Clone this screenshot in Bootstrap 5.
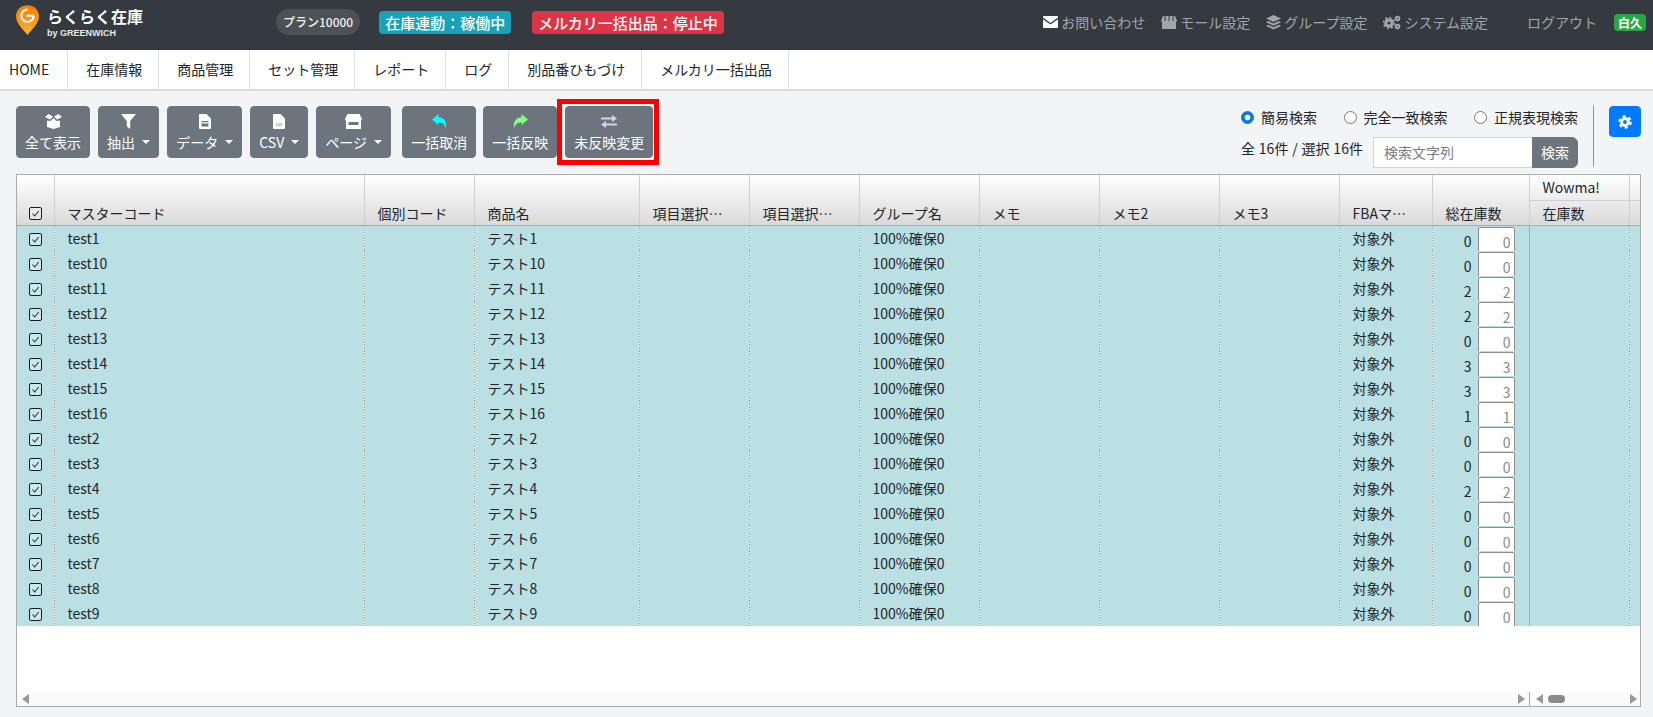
<!DOCTYPE html>
<html lang="ja">
<head>
    <meta charset="UTF-8">
    <meta name="viewport" content="width=device-width, initial-scale=1.0">
    <title>らくらく在庫</title>
    <link href="https://cdn.jsdelivr.net/npm/bootstrap@5.3.0/dist/css/bootstrap.min.css" rel="stylesheet">
    <style>
        body {
            font-family: "Noto Sans CJK JP", "Noto Sans", sans-serif;
            font-size: 14px;
            color: #212529;
            background-color: #f3f4f6;
            height: 717px;
            overflow: hidden;
        }

        /* ヘッダー */
        .top-bar {
            height: 50px;
            background-color: #343a40;
            padding: 0 7px 6px 16px;
        }
        .logo-box {
            width: 260px;
            align-self: flex-start;
            margin-top: 5px;
        }
        .logo-text {
            color: #fff;
            font-size: 16px;
            font-weight: 700;
            line-height: 20px;
            margin-top: 1px;
        }
        .logo-sub {
            color: #e9e9e9;
            font-family: "Liberation Sans", sans-serif;
            font-size: 9px;
            font-weight: 700;
            line-height: 10px;
            margin-top: 2px;
        }
        .plan-pill {
            background-color: #4c5156;
            color: #f2f2f2;
            font-size: 12px;
            font-weight: 500;
            padding: 5px 7px;
            border-radius: 13px;
            line-height: 16px;
        }
        .state-pill {
            color: #fff;
            font-size: 15px;
            font-weight: 500;
            line-height: 23px;
            padding: 0 6px;
            border-radius: 4px;
        }
        .state-on { background-color: #17a2b8; margin-left: 19px; }
        .state-off { background-color: #dc3545; margin-left: 21px; }
        .top-link {
            color: #a3a6a9;
            text-decoration: none;
            display: flex;
            align-items: center;
            gap: 3px;
            margin-left: 16px;
        }
        .logout-link { margin-left: 39px; }
        .user-tag {
            background-color: #28a745;
            color: #fff;
            font-size: 12px;
            font-weight: 700;
            line-height: 17px;
            padding: 0 4px;
            border-radius: 4px;
            margin-left: 17px;
        }

        /* メニュー */
        .menu-bar {
            height: 41px;
            background-color: #fff;
            border-bottom: 2px solid #dcdcdc;
        }
        .menu-bar .nav-link {
            color: #212529;
            font-size: 14px;
            line-height: 39px;
            padding: 0 16px 0 18px;
            border-right: 1px solid #dee2e6;
        }
        .menu-bar .nav-item:first-child .nav-link { padding: 0 18px 0 9px; }

        /* ツールバー */
        .page-body { padding: 15px 12px 0 16px; }
        .tool-row { height: 68px; }
        .tool-btn {
            position: relative;
            background-color: #6c757d;
            border-color: #6c757d;
            color: #fff;
            font-size: 14px;
            line-height: 21px;
            padding: 7px 8px 5px;
            border-radius: 4px;
            height: 52px;
            white-space: nowrap;
        }
        .tool-btn svg { display: block; margin: 0 auto 3px; height: 15px; }
        .tool-btn.dropdown-toggle::after { margin-left: 4px; }
        .btn-gap { margin-left: 3px; }
        .btn-tight { margin-left: -1px; }
        .marked-btn::before {
            content: "";
            position: absolute;
            inset: -8px -7px -8px -9px;
            border: 5px solid #f00;
        }
        .search-box { width: 337px; margin-right: 15px; }
        .search-kind { font-size: 14px; line-height: 22px; margin-bottom: 9px; }
        .search-kind .form-check { padding-left: 20px; margin: 0; min-height: 0; }
        .search-kind .form-check-input {
            width: 13px;
            height: 13px;
            margin: 5px 0 0 -20px;
            border-color: #777;
        }
        .search-kind .form-check-input:checked {
            background-color: #0d7ad8;
            border-color: #0d7ad8;
        }
        .search-count { line-height: 20px; margin-top: 1px; word-spacing: .7px; }
        .search-group { width: 205px; }
        .search-group .form-control {
            height: 31px;
            font-size: 14px;
            padding: 2px 10px 4px;
            border-radius: 0;
            border-color: #ced4da;
        }
        .search-group .form-control::placeholder { color: #757c83; }
        .search-group .btn {
            height: 31px;
            font-size: 14px;
            padding: 3px 8px;
            background-color: #6c757d;
            border-color: #6c757d;
        }
        .tool-rule { border-left: 1px solid #8a8f94; height: 60px; margin-right: 15px; }
        .gear-btn {
            width: 32px;
            height: 31px;
            padding: 0;
            border-radius: 4px;
            background-color: #007bff;
            border-color: #007bff;
        }

        /* 在庫テーブル */
        .grid-wrap {
            height: 533px;
            border: 1px solid #aaa;
            background-color: #fff;
        }
        .grid-main { flex: 1 1 auto; overflow: hidden; }
        .stock-grid {
            table-layout: fixed;
            width: 1623px;
            margin: 0;
            font-size: 14px;
        }
        .stock-grid th {
            height: 25px;
            font-weight: 400;
            color: #212529;
            padding: 0 24px 2px 13px;
            vertical-align: bottom;
            line-height: 20px;
            white-space: nowrap;
            overflow: hidden;
            text-overflow: ellipsis;
            background: linear-gradient(#fff, #d9d9d9);
            border: 0;
            border-right: 1px solid #cfcfcf;
            border-bottom: 1px solid #aaa;
            box-shadow: none;
        }
        .stock-grid th.head-top { background: linear-gradient(#fff, #ececec); border-bottom-color: #cfcfcf; padding-bottom: 3px; }
        .stock-grid th.head-low { background: linear-gradient(#ececec, #d9d9d9); }
        .stock-grid th.check-head { padding: 0 0 3px; text-align: center; }
        .stock-grid td {
            height: 25px;
            padding: 0 4px 0 13px;
            line-height: 24px;
            background-color: #bbe0e4;
            color: #212529;
            border: 0;
            border-right: 1px dotted #9aa8aa;
            box-shadow: none;
            white-space: nowrap;
            overflow: hidden;
            vertical-align: top;
        }
        .stock-grid td.check-cell { padding: 0; text-align: center; }
        .stock-grid td.stock-cell { padding: 1px 0 0; }
        .stock-grid td.pane-end { border-right: 1px solid #9fb0b3; }
        .check-mark { display: inline-block; vertical-align: middle; width: 13px; height: 13px; }
        .stock-line { display: flex; justify-content: flex-end; height: 24px; padding-right: 14px; }
        .stock-num { line-height: 24px; margin: 2px 6px 0 0; }
        .stock-input {
            width: 37px;
            height: 30px;
            border: 1px solid #8d8d8d;
            border-radius: 2px;
            background-color: #fff;
            color: #8a8a8a;
            text-align: right;
            padding: 2px 3px 0 0;
            line-height: 24px;
        }

        /* スクロールバー */
        .scroll-row { height: 14px; background-color: #fafafa; }
        .scroll-left { width: 1512px; padding: 0 4px 0 5px; }
        .scroll-right { flex: 1 1 auto; border-left: 1px solid #aaa; padding: 0 3px 0 6px; }
        .arrow-l, .arrow-r { width: 0; height: 0; border-top: 5px solid transparent; border-bottom: 5px solid transparent; }
        .arrow-l { border-right: 7px solid #999; }
        .arrow-r { border-left: 7px solid #999; }
        .scroll-thumb { width: 17px; height: 8px; border-radius: 4px; background-color: #8a8a8a; margin: 0 auto 0 5px; }
    </style>
</head>
<body>
    <!-- ヘッダー -->
    <div class="top-bar d-flex align-items-center">
        <div class="logo-box d-flex">
            <svg width="23" height="31" viewBox="0 0 24 32" class="me-1 flex-shrink-0">
                <defs>
                    <linearGradient id="pinColor" x1="0" y1="0" x2="0" y2="1">
                        <stop offset="0" stop-color="#f57c00"/>
                        <stop offset="1" stop-color="#f9b233"/>
                    </linearGradient>
                </defs>
                <path d="M12 0C5 0 0 5 0 11.500C0 19 8 26 12 31C16 26 24 19 24 11.500C24 5 19 0 12 0Z" fill="url(#pinColor)"/>
                <circle cx="12" cy="11" r="6.500" fill="none" stroke="#fff" stroke-width="2.200" stroke-dasharray="30 11"/>
                <path d="M11 11h7" stroke="#fff" stroke-width="2.200"/>
            </svg>
            <div class="ms-1">
                <div class="logo-text">らくらく在庫</div>
                <div class="logo-sub">by GREENWICH</div>
            </div>
        </div>
        <span class="plan-pill">プラン10000</span>
        <span class="state-pill state-on">在庫連動：稼働中</span>
        <span class="state-pill state-off">メルカリ一括出品：停止中</span>

        <div class="ms-auto d-flex align-items-center">
            <a href="#" class="top-link">
                <svg width="15" height="12" viewBox="0 0 15 12"><path d="M1 0h13a1 1 0 0 1 1 1v.6L7.500 7 0 1.600V1a1 1 0 0 1 1-1zM0 3.200L7.500 8.600 15 3.200V11a1 1 0 0 1-1 1H1a1 1 0 0 1-1-1z" fill="#fff"/></svg>
                お問い合わせ
            </a>
            <a href="#" class="top-link">
                <svg width="16" height="13" viewBox="0 0 16 13"><path d="M2 0h12l2 4.500a1.800 1.800 0 0 1-1 1.500v7H1V6a1.800 1.800 0 0 1-1-1.500z" fill="#a3a6a9"/><path d="M4 0v5M8 0v5M12 0v5" stroke="#343a40"/></svg>
                モール設定
            </a>
            <a href="#" class="top-link">
                <svg width="15" height="15" viewBox="0 0 15 15" fill="#a3a6a9"><path d="M7.500 0L15 3.500 7.500 7 0 3.500z"/><path d="M2 6L7.500 8.500 13 6l2 1.200-7.500 3.500L0 7.200z"/><path d="M2 9.800l5.500 2.500L13 9.800l2 1.200-7.500 3.500L0 11z"/></svg>
                グループ設定
            </a>
            <a href="#" class="top-link">
                <svg width="18" height="15" viewBox="0 0 18 15"><g fill="none" stroke="#a3a6a9"><circle cx="6" cy="8" r="3.200" stroke-width="3.200"/><circle cx="6" cy="8" r="5.400" stroke-width="1.800" stroke-dasharray="2 2.200"/><circle cx="14.500" cy="3.500" r="1.800" stroke-width="2"/><circle cx="14.500" cy="11.500" r="1.800" stroke-width="2"/></g></svg>
                システム設定
            </a>
            <a href="#" class="top-link logout-link">ログアウト</a>
            <span class="user-tag">白久</span>
        </div>
    </div>

    <!-- メニュー -->
    <ul class="nav menu-bar">
        <li class="nav-item"><a class="nav-link" href="#">HOME</a></li>
        <li class="nav-item"><a class="nav-link" href="#">在庫情報</a></li>
        <li class="nav-item"><a class="nav-link" href="#">商品管理</a></li>
        <li class="nav-item"><a class="nav-link" href="#">セット管理</a></li>
        <li class="nav-item"><a class="nav-link" href="#">レポート</a></li>
        <li class="nav-item"><a class="nav-link" href="#">ログ</a></li>
        <li class="nav-item"><a class="nav-link" href="#">別品番ひもづけ</a></li>
        <li class="nav-item"><a class="nav-link" href="#">メルカリ一括出品</a></li>
    </ul>

    <div class="page-body">
        <!-- ツールバー -->
        <div class="tool-row d-flex align-items-start">
            <div class="d-flex align-items-start gap-2">
                <button class="btn tool-btn">
                    <svg width="17" height="15" viewBox="0 0 17 15" fill="#fff"><path d="M0 3l3.500-3L8 2.500 5 5.500zM17 3l-3.500-3L9 2.500l3 3z"/><path d="M2 6.500l3.500.5L8.500 4 11.500 7l3.500-.5V13l-6.500 2L2 13z"/></svg>
                    全て表示
                </button>
                <button class="btn tool-btn dropdown-toggle">
                    <svg width="15" height="15" viewBox="0 0 15 15" fill="#fff"><path d="M0 0h15L9.200 7v8L5.800 12.500V7z"/></svg>
                    抽出
                </button>
                <button class="btn tool-btn dropdown-toggle">
                    <svg width="12" height="15" viewBox="0 0 12 15" fill="#fff"><path fill-rule="evenodd" d="M1 0h6.500L12 4.500V14a1 1 0 0 1-1 1H1a1 1 0 0 1-1-1V1a1 1 0 0 1 1-1zM2.500 7v1.200h7V7zM2.500 9.500v3h7v-3z"/></svg>
                    データ
                </button>
                <button class="btn tool-btn dropdown-toggle">
                    <svg width="12" height="15" viewBox="0 0 12 15"><path d="M1 0h6.500L12 4.500V14a1 1 0 0 1-1 1H1a1 1 0 0 1-1-1V1a1 1 0 0 1 1-1z" fill="#fff"/><text x="6" y="11.500" font-size="4.500" text-anchor="middle" fill="#6c757d">csv</text></svg>
                    CSV
                </button>
                <button class="btn tool-btn dropdown-toggle">
                    <svg width="17" height="15" viewBox="0 0 17 15" fill="#fff"><path fill-rule="evenodd" d="M2.500 0h12L17 5a2 2 0 0 1-1 1.500V15H1V6.500A2 2 0 0 1 0 5zM3.500 8v3h10V8z"/></svg>
                    ページ
                </button>
                <button class="btn tool-btn btn-gap">
                    <svg width="15" height="15" viewBox="0 0 15 15" fill="#0ff"><path d="M0 5.500L6.500 0v3.300C11 3.500 15 6 14 15 13 10.500 10.500 8.500 6.500 8.300V11z"/></svg>
                    一括取消
                </button>
                <button class="btn tool-btn btn-tight">
                    <svg width="15" height="15" viewBox="0 0 15 15" fill="#80ff80"><path d="M15 5.500L8.500 0v3.300C4 3.500 0 6 1 15 2 10.500 4.500 8.500 8.500 8.300V11z"/></svg>
                    一括反映
                </button>
                <button class="btn tool-btn marked-btn">
                    <svg width="16" height="15" viewBox="0 0 16 15" fill="#cfd4f0"><path d="M0 3.500h11V1l5 3.500-5 3.500V5.500H0zM16 9.500H5V7L0 10.500 5 14v-2.500h11z"/></svg>
                    未反映変更
                </button>
            </div>

            <div class="search-box ms-auto">
                <div class="search-kind d-flex justify-content-between">
                    <div class="form-check">
                        <input class="form-check-input" type="radio" name="searchKind" id="kindEasy" checked>
                        <label class="form-check-label" for="kindEasy">簡易検索</label>
                    </div>
                    <div class="form-check">
                        <input class="form-check-input" type="radio" name="searchKind" id="kindExact">
                        <label class="form-check-label" for="kindExact">完全一致検索</label>
                    </div>
                    <div class="form-check">
                        <input class="form-check-input" type="radio" name="searchKind" id="kindRegex">
                        <label class="form-check-label" for="kindRegex">正規表現検索</label>
                    </div>
                </div>
                <div class="d-flex justify-content-between align-items-start">
                    <span class="search-count">全 16件 / 選択 16件</span>
                    <div class="input-group search-group flex-nowrap">
                        <input type="text" class="form-control" placeholder="検索文字列">
                        <button class="btn btn-secondary" type="button">検索</button>
                    </div>
                </div>
            </div>
            <div class="tool-rule"></div>
            <button class="btn btn-primary gear-btn d-flex align-items-center justify-content-center">
                <svg width="14" height="14" viewBox="0 0 14 14"><circle cx="7" cy="7" r="3.400" fill="none" stroke="#fff" stroke-width="3"/><circle cx="7" cy="7" r="5.800" fill="none" stroke="#fff" stroke-width="2" stroke-dasharray="3 3.070"/></svg>
            </button>
        </div>

        <!-- 在庫テーブル -->
        <div class="grid-wrap d-flex flex-column">
            <div class="grid-main">
                <table class="table stock-grid">
                    <colgroup>
                        <col style="width:37px"><col style="width:310px"><col style="width:110px"><col style="width:165px">
                        <col style="width:110px"><col style="width:110px"><col style="width:120px"><col style="width:120px">
                        <col style="width:120px"><col style="width:120px"><col style="width:93px"><col style="width:97px">
                        <col style="width:100px"><col style="width:11px">
                    </colgroup>
                    <thead>
                        <tr>
                            <th rowspan="2" class="check-head" id="allCheck"></th>
                            <th rowspan="2">マスターコード</th>
                            <th rowspan="2">個別コード</th>
                            <th rowspan="2">商品名</th>
                            <th rowspan="2">項目選択肢1</th>
                            <th rowspan="2">項目選択肢2</th>
                            <th rowspan="2">グループ名</th>
                            <th rowspan="2">メモ</th>
                            <th rowspan="2">メモ2</th>
                            <th rowspan="2">メモ3</th>
                            <th rowspan="2">FBAマッピング</th>
                            <th rowspan="2">総在庫数</th>
                            <th class="head-top">Wowma!</th>
                            <th class="head-top"></th>
                        </tr>
                        <tr>
                            <th class="head-low">在庫数</th>
                            <th class="head-low"></th>
                        </tr>
                    </thead>
                    <tbody id="stock-list"></tbody>
                </table>
            </div>
            <div class="scroll-row d-flex">
                <div class="scroll-left d-flex align-items-center justify-content-between">
                    <span class="arrow-l"></span>
                    <span class="arrow-r"></span>
                </div>
                <div class="scroll-right d-flex align-items-center justify-content-between">
                    <span class="arrow-l"></span>
                    <span class="scroll-thumb"></span>
                    <span class="arrow-r"></span>
                </div>
            </div>
        </div>
    </div>

    <script>
        const items = [
            ['test1', 'テスト1', 0], ['test10', 'テスト10', 0], ['test11', 'テスト11', 2], ['test12', 'テスト12', 2],
            ['test13', 'テスト13', 0], ['test14', 'テスト14', 3], ['test15', 'テスト15', 3], ['test16', 'テスト16', 1],
            ['test2', 'テスト2', 0], ['test3', 'テスト3', 0], ['test4', 'テスト4', 2], ['test5', 'テスト5', 0],
            ['test6', 'テスト6', 0], ['test7', 'テスト7', 0], ['test8', 'テスト8', 0], ['test9', 'テスト9', 0]
        ];

        const checkMark = `<svg class="check-mark" viewBox="0 0 13 13"><rect x=".5" y=".5" width="12" height="12" rx="1.500" fill="#fff" fill-opacity=".25" stroke="#1a1a2e"/><path d="M3.500 6.500l2.200 2.500 4-5" fill="none" stroke="#333" stroke-width="1.100"/></svg>`;

        document.getElementById('allCheck').innerHTML = checkMark;

        const list = document.getElementById('stock-list');
        items.forEach(item => {
            list.innerHTML += `
                <tr>
                    <td class="check-cell">${checkMark}</td>
                    <td>${item[0]}</td>
                    <td></td>
                    <td>${item[1]}</td>
                    <td></td>
                    <td></td>
                    <td>100%確保0</td>
                    <td></td>
                    <td></td>
                    <td></td>
                    <td>対象外</td>
                    <td class="stock-cell pane-end">
                        <div class="stock-line">
                            <span class="stock-num">${item[2]}</span>
                            <div class="stock-input">${item[2]}</div>
                        </div>
                    </td>
                    <td></td>
                    <td></td>
                </tr>`;
        });
    </script>
    <script src="https://cdn.jsdelivr.net/npm/bootstrap@5.3.0/dist/js/bootstrap.bundle.min.js"></script>
</body>
</html>
